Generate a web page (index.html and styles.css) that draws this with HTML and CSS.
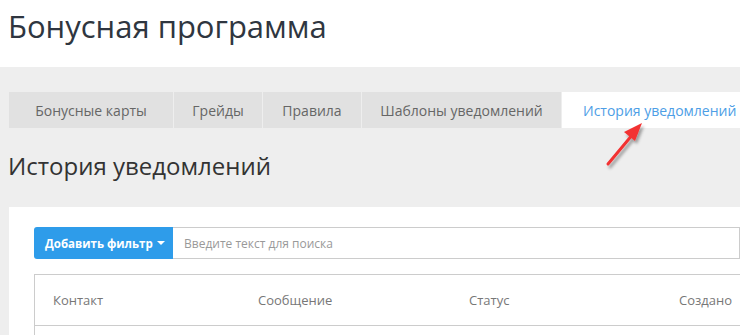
FILE: index.html
```html
<!DOCTYPE html>
<html lang="ru">
<head>
<meta charset="utf-8">
<link rel="stylesheet" href="styles.css">
</head>
<body>
<header class="top">
  <h1 class="title">Бонусная программа</h1>
</header>
<main class="main">
  <nav class="tabs">
    <a class="tab t1">Бонусные карты</a>
    <a class="tab t2">Грейды</a>
    <a class="tab t3">Правила</a>
    <a class="tab t4">Шаблоны уведомлений</a>
    <a class="tab active">История уведомлений</a>
  </nav>
  <h2 class="heading">История уведомлений</h2>
  <section class="panel">
    <div class="search">
      <button class="filter-btn">Добавить фильтр <span class="caret"></span></button>
      <div class="input">Введите текст для поиска</div>
    </div>
    <div class="table">
      <div class="row head">
        <div class="cell c1">Контакт</div>
        <div class="cell c2">Сообщение</div>
        <div class="cell c3">Статус</div>
        <div class="cell c4">Создано</div>
      </div>
      <div class="row body"></div>
    </div>
  </section>
  <svg class="arrow" width="60" height="60" viewBox="0 0 60 60">
    <defs>
      <filter id="sh" x="-50%" y="-50%" width="200%" height="200%">
        <feDropShadow dx="2" dy="3" stdDeviation="1.5" flood-color="#000" flood-opacity="0.35"/>
      </filter>
    </defs>
    <g filter="url(#sh)">
      <line x1="5" y1="48" x2="30" y2="18" stroke="#f23232" stroke-width="3" stroke-linecap="round"/>
      <polygon points="39,7 21,16 32,25" fill="#f23232"/>
    </g>
  </svg>
</main>
</body>
</html>
```
FILE: styles.css
```css
html, body {
  margin: 0;
  padding: 0;
  height: 100%;
  overflow: hidden;
  font-family: "Open Sans", "Noto Sans", sans-serif;
}
body {
  background: #eeeeee;
}
.top {
  background: #ffffff;
  height: 67px;
  padding: 0 8px;
  box-sizing: border-box;
}
.title {
  margin: 0;
  padding-top: 5px;
  font-size: 31px;
  font-weight: 400;
  color: #2f3640;
  line-height: 42px;
}
.main {
  position: relative;
  padding: 25px 0 0 9px;
}
.tabs {
  display: flex;
  height: 36px;
  white-space: nowrap;
}
.tab {
  display: flex;
  align-items: center;
  justify-content: center;
  background: #e1e1e1;
  color: #666;
  font-size: 14px;
  margin-right: 1px;
  box-sizing: border-box;
  flex-shrink: 0;
}
.t1 { width: 164px; }
.t2 { width: 88px; }
.t3 { width: 98px; }
.t4 { width: 199px; }
.tab.active {
  background: #ffffff;
  color: #4d9ee6;
  flex: 1;
  justify-content: flex-start;
  padding-left: 21px;
  margin-right: 0;
}
.heading {
  margin: 0;
  padding: 21px 0 0 0;
  margin-left: -1px;
  font-size: 24px;
  font-weight: 400;
  color: #333;
  line-height: 33px;
  height: 79px;
  box-sizing: border-box;
}
.panel {
  background: #fff;
  padding: 20px 0 0 25px;
  height: 200px;
}
.search {
  display: flex;
  height: 32px;
}
.filter-btn {
  background: #2e9cea;
  color: #fff;
  border: none;
  border-radius: 3px 0 0 3px;
  font-family: "Open Sans", sans-serif;
  font-weight: 700;
  font-size: 11.5px;
  padding: 0 10px 0 11px;
  width: 139px;
  flex-shrink: 0;
  display: flex;
  align-items: center;
  white-space: nowrap;
}
.caret {
  display: inline-block;
  width: 0;
  height: 0;
  margin-left: 4px;
  border-left: 4px solid transparent;
  border-right: 4px solid transparent;
  border-top: 4px solid #fff;
}
.input {
  flex: 1;
  border: 1px solid #cccccc;
  border-left: none;
  display: flex;
  align-items: center;
  padding-left: 11px;
  font-size: 12px;
  color: #999;
}
.table {
  margin-top: 15px;
  border-left: 1px solid #cccccc;
  border-top: 1px solid #cccccc;
}
.row {
  display: flex;
}
.row.head {
  height: 51px;
  border-bottom: 1px solid #cccccc;
  align-items: center;
  box-sizing: border-box;
}
.cell {
  font-size: 13px;
  color: #777;
  padding-left: 18px;
  box-sizing: border-box;
  flex-shrink: 0;
  white-space: nowrap;
}
.c1 { width: 205px; }
.c2 { width: 211px; }
.c3 { width: 210px; }
.c4 { width: 210px; }
.row.body {
  height: 60px;
}
.arrow {
  position: absolute;
  left: 603px;
  top: 49px;
}
```
